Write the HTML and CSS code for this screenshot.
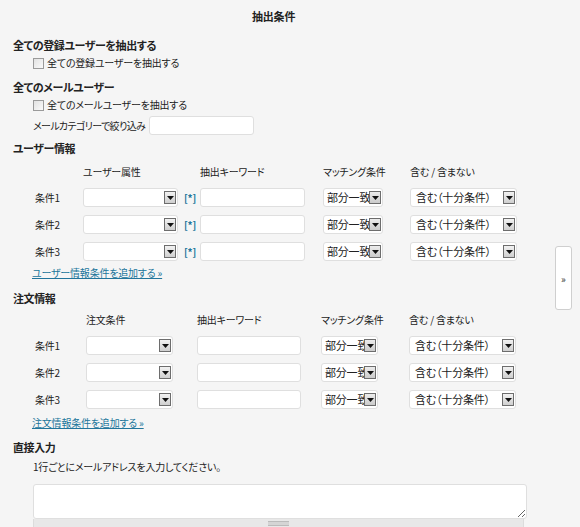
FILE: index.html
```html
<!DOCTYPE html>
<html lang="ja">

<head>
    <meta charset="UTF-8">
    <title>抽出条件</title>
    <link rel="stylesheet" href="styles.css">
</head>

<body>
    <div class="page">
        <div class="title">抽出条件</div>

        <h3 class="section first">全ての登録ユーザーを抽出する</h3>
        <label class="check"><input type="checkbox"> 全ての登録ユーザーを抽出する</label>

        <h3 class="section mail">全てのメールユーザー</h3>
        <label class="check"><input type="checkbox"> 全てのメールユーザーを抽出する</label>
        <div class="category">
            <span class="cat-label">メールカテゴリーで絞り込み</span>
            <input type="text" class="text cat-input">
        </div>

        <h3 class="section user">ユーザー情報</h3>
        <div class="cond user-cond">
            <div class="head"></div>
            <div class="head">ユーザー属性</div>
            <div class="head"></div>
            <div class="head">抽出キーワード</div>
            <div class="head">マッチング条件</div>
            <div class="head">含む / 含まない</div>

            <div class="label">条件1</div>
            <div class="select attr"><span class="arrow"><svg width="7" height="4" viewBox="0 0 7 4"><path d="M0 0h7L3.5 4z" /></svg></span></div>
            <a class="star" href="#">[*]</a>
            <input type="text" class="text kw">
            <div class="select match">部分一致<span class="arrow"><svg width="7" height="4" viewBox="0 0 7 4"><path d="M0 0h7L3.5 4z" /></svg></span></div>
            <div class="select incl">含む（十分条件）<span class="arrow"><svg width="7" height="4" viewBox="0 0 7 4"><path d="M0 0h7L3.5 4z" /></svg></span></div>

            <div class="label">条件2</div>
            <div class="select attr"><span class="arrow"><svg width="7" height="4" viewBox="0 0 7 4"><path d="M0 0h7L3.5 4z" /></svg></span></div>
            <a class="star" href="#">[*]</a>
            <input type="text" class="text kw">
            <div class="select match">部分一致<span class="arrow"><svg width="7" height="4" viewBox="0 0 7 4"><path d="M0 0h7L3.5 4z" /></svg></span></div>
            <div class="select incl">含む（十分条件）<span class="arrow"><svg width="7" height="4" viewBox="0 0 7 4"><path d="M0 0h7L3.5 4z" /></svg></span></div>

            <div class="label">条件3</div>
            <div class="select attr"><span class="arrow"><svg width="7" height="4" viewBox="0 0 7 4"><path d="M0 0h7L3.5 4z" /></svg></span></div>
            <a class="star" href="#">[*]</a>
            <input type="text" class="text kw">
            <div class="select match">部分一致<span class="arrow"><svg width="7" height="4" viewBox="0 0 7 4"><path d="M0 0h7L3.5 4z" /></svg></span></div>
            <div class="select incl">含む（十分条件）<span class="arrow"><svg width="7" height="4" viewBox="0 0 7 4"><path d="M0 0h7L3.5 4z" /></svg></span></div>
        </div>
        <a class="add" href="#">ユーザー情報条件を追加する »</a>

        <h3 class="section order">注文情報</h3>
        <div class="cond order-cond">
            <div class="head"></div>
            <div class="head">注文条件</div>
            <div class="head">抽出キーワード</div>
            <div class="head">マッチング条件</div>
            <div class="head">含む / 含まない</div>

            <div class="label">条件1</div>
            <div class="select ord"><span class="arrow"><svg width="7" height="4" viewBox="0 0 7 4"><path d="M0 0h7L3.5 4z" /></svg></span></div>
            <input type="text" class="text kw2">
            <div class="select match2">部分一致<span class="arrow"><svg width="7" height="4" viewBox="0 0 7 4"><path d="M0 0h7L3.5 4z" /></svg></span></div>
            <div class="select incl">含む（十分条件）<span class="arrow"><svg width="7" height="4" viewBox="0 0 7 4"><path d="M0 0h7L3.5 4z" /></svg></span></div>

            <div class="label">条件2</div>
            <div class="select ord"><span class="arrow"><svg width="7" height="4" viewBox="0 0 7 4"><path d="M0 0h7L3.5 4z" /></svg></span></div>
            <input type="text" class="text kw2">
            <div class="select match2">部分一致<span class="arrow"><svg width="7" height="4" viewBox="0 0 7 4"><path d="M0 0h7L3.5 4z" /></svg></span></div>
            <div class="select incl">含む（十分条件）<span class="arrow"><svg width="7" height="4" viewBox="0 0 7 4"><path d="M0 0h7L3.5 4z" /></svg></span></div>

            <div class="label">条件3</div>
            <div class="select ord"><span class="arrow"><svg width="7" height="4" viewBox="0 0 7 4"><path d="M0 0h7L3.5 4z" /></svg></span></div>
            <input type="text" class="text kw2">
            <div class="select match2">部分一致<span class="arrow"><svg width="7" height="4" viewBox="0 0 7 4"><path d="M0 0h7L3.5 4z" /></svg></span></div>
            <div class="select incl">含む（十分条件）<span class="arrow"><svg width="7" height="4" viewBox="0 0 7 4"><path d="M0 0h7L3.5 4z" /></svg></span></div>
        </div>
        <a class="add" href="#">注文情報条件を追加する »</a>

        <h3 class="section direct">直接入力</h3>
        <p class="note">1行ごとにメールアドレスを入力してください。</p>
        <div class="area">
            <textarea></textarea>
            <div class="grip"><span></span></div>
        </div>

        <button class="toggle">»</button>
    </div>
</body>

</html>
```

FILE: styles.css
```css
body {
    margin: 0;
    background-color: #f5f5f5;
    font-family: "Noto Sans CJK JP", "DejaVu Sans", sans-serif;
    font-size: 10px;
    letter-spacing: -0.2px;
    font-feature-settings: "palt";
    color: #222;
}

.page {
    position: relative;
    width: 580px;
    height: 527px;
    padding-top: 5px;
    box-sizing: border-box;
    overflow: hidden;
}

.title {
    line-height: 22px;
    font-size: 11px;
    font-weight: bold;
    padding-left: 252px;
}

.section {
    margin: 0;
    padding-left: 13px;
    font-size: 11px;
    font-weight: bold;
    letter-spacing: -0.4px;
    line-height: 16px;
}

.section.first { margin-top: 10px; }
.section.mail { margin-top: 7px; }
.section.user { margin-top: 5px; }
.section.order { margin-top: 9px; }
.section.direct { margin-top: 8px; }

.check {
    display: flex;
    align-items: center;
    gap: 3px;
    margin-top: 1px;
    padding-left: 33px;
    line-height: 18px;
}

.check input {
    appearance: none;
    margin: 0;
    width: 11px;
    height: 11px;
    border: 1px solid #9a9a9a;
    background: linear-gradient(135deg, #e2e2e2, #fafafa);
    box-sizing: border-box;
}

.category {
    display: flex;
    align-items: center;
    gap: 4px;
    height: 20px;
    margin-top: 1px;
    padding-left: 33px;
}

.cat-label {
    white-space: nowrap;
    letter-spacing: -0.6px;
}

.text {
    margin: 0;
    height: 19px;
    box-sizing: border-box;
    border: 1px solid #dfdfdf;
    border-radius: 3px;
    background: #fff;
    font: inherit;
}

.cat-input {
    width: 105px;
}

.cond {
    display: grid;
    grid-auto-rows: 27px;
    align-items: center;
    padding-left: 35px;
    margin-top: 8px;
}

.cond .head {
    height: 16px;
    line-height: 16px;
    align-self: start;
}

.user-cond {
    grid-template-columns: 48px 101px 16px 123px 87px 107px;
    grid-template-rows: 20px;
}

.order-cond {
    grid-template-columns: 51px 111px 124px 88px 107px;
    grid-template-rows: 20px;
    margin-top: 6px;
}

.select {
    position: relative;
    height: 19px;
    box-sizing: border-box;
    border: 1px solid #dfdfdf;
    border-radius: 3px;
    background: #fff;
    line-height: 17px;
    padding-left: 3px;
    font-size: 11px;
    white-space: nowrap;
    overflow: hidden;
}

.select .arrow {
    position: absolute;
    right: 1px;
    top: 2px;
    width: 12px;
    height: 13px;
    box-sizing: border-box;
    border: 1px solid #6d6d6d;
    background: linear-gradient(#f2f2f2, #cfcfcf);
    display: flex;
    align-items: center;
    justify-content: center;
}

.select .arrow path {
    fill: #111;
}

.attr { width: 95px; }
.ord { width: 87px; }
.match { width: 60px; }
.match2 { width: 57px; }
.incl { width: 107px; padding-left: 5px; }

.match .arrow,
.match2 .arrow {
    background: linear-gradient(#ececec, #cbcbcb);
}

.star {
    color: #21759b;
    text-decoration: none;
    font-weight: bold;
}

.kw { width: 105px; }
.kw2 { width: 104px; }

.add {
    display: inline-block;
    margin-left: 32px;
    line-height: 16px;
    color: #21759b;
}

.order-cond + .add {
    margin-top: 2px;
}

.note {
    margin: 4px 0 0;
    padding-left: 33px;
    line-height: 16px;
}

.area {
    margin: 9px 0 0 33px;
    width: 494px;
}

.area textarea {
    display: block;
    width: 494px;
    height: 35px;
    margin: 0;
    box-sizing: border-box;
    border: 1px solid #dfdfdf;
    border-radius: 3px;
    background: #fff;
}

.grip {
    width: 491px;
    height: 9px;
    background: #e8e8e8;
    border: 1px solid #dcdcdc;
    border-top: none;
    box-sizing: border-box;
    display: flex;
    justify-content: center;
    align-items: center;
}

.grip span {
    width: 21px;
    height: 3px;
    border-top: 1px solid #bbb;
    border-bottom: 1px solid #bbb;
    background: #d5d5d5;
}

.toggle {
    position: absolute;
    left: 555px;
    top: 246px;
    width: 17px;
    height: 64px;
    padding: 0;
    border: 1px solid #cfcfcf;
    border-radius: 3px;
    background: #fff;
    font: inherit;
    font-size: 10px;
    color: #333;
}
```
